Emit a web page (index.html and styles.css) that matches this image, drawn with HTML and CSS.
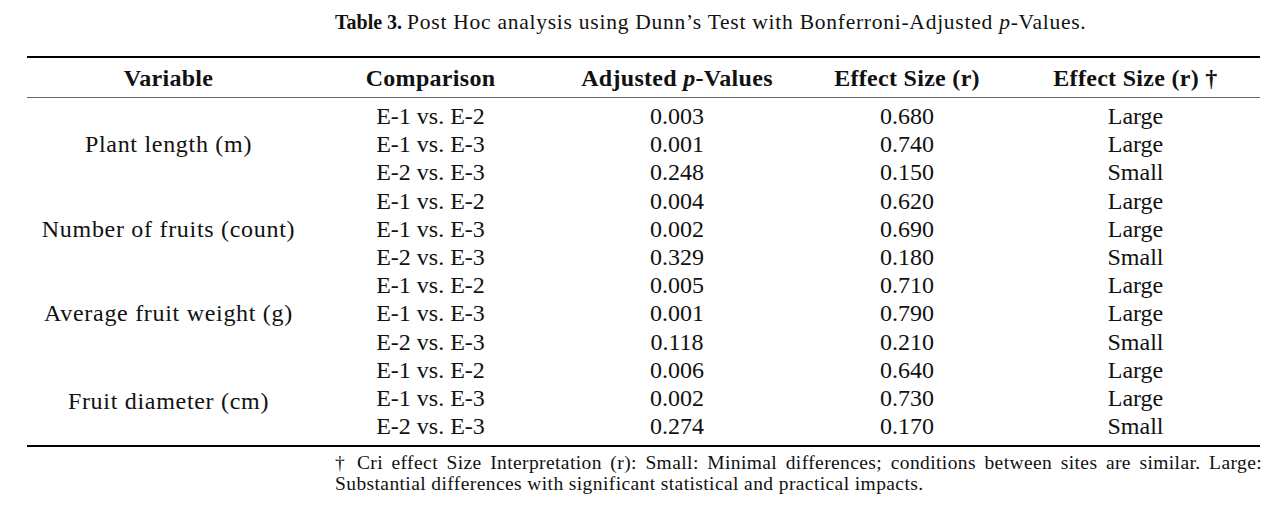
FILE: index.html
```html
<!DOCTYPE html>
<html lang="en">
<head>
<meta charset="utf-8">
<title>Table 3</title>
<link rel="stylesheet" href="styles.css">
</head>
<body>
<div class="page">
  <p class="caption"><b>Table 3.</b> <span class="cap-text">Post Hoc analysis using Dunn’s Test with Bonferroni-Adjusted <i>p</i>-Values.</span></p>
  <table class="tbl">
    <colgroup>
      <col class="c1"><col class="c2"><col class="c3"><col class="c4"><col class="c5">
    </colgroup>
    <thead>
      <tr>
        <th>Variable</th>
        <th>Comparison</th>
        <th>Adjusted <i>p</i>-Values</th>
        <th>Effect Size (r)</th>
        <th>Effect Size (r) †</th>
      </tr>
    </thead>
    <tbody>
      <tr class="first"><td class="var" rowspan="3">Plant length (m)</td><td>E-1 vs. E-2</td><td>0.003</td><td>0.680</td><td>Large</td></tr>
      <tr><td>E-1 vs. E-3</td><td>0.001</td><td>0.740</td><td>Large</td></tr>
      <tr><td>E-2 vs. E-3</td><td>0.248</td><td>0.150</td><td>Small</td></tr>
      <tr><td class="var" rowspan="3">Number of fruits (count)</td><td>E-1 vs. E-2</td><td>0.004</td><td>0.620</td><td>Large</td></tr>
      <tr><td>E-1 vs. E-3</td><td>0.002</td><td>0.690</td><td>Large</td></tr>
      <tr><td>E-2 vs. E-3</td><td>0.329</td><td>0.180</td><td>Small</td></tr>
      <tr><td class="var" rowspan="3">Average fruit weight (g)</td><td>E-1 vs. E-2</td><td>0.005</td><td>0.710</td><td>Large</td></tr>
      <tr><td>E-1 vs. E-3</td><td>0.001</td><td>0.790</td><td>Large</td></tr>
      <tr><td>E-2 vs. E-3</td><td>0.118</td><td>0.210</td><td>Small</td></tr>
      <tr><td class="var" rowspan="3">Fruit diameter (cm)</td><td>E-1 vs. E-2</td><td>0.006</td><td>0.640</td><td>Large</td></tr>
      <tr><td>E-1 vs. E-3</td><td>0.002</td><td>0.730</td><td>Large</td></tr>
      <tr class="last"><td>E-2 vs. E-3</td><td>0.274</td><td>0.170</td><td>Small</td></tr>
    </tbody>
  </table>
  <div class="note">
    <span class="note-line justified">† Cri effect Size Interpretation (r): Small: Minimal differences; conditions between sites are similar. Large:</span>
    <span class="note-line">Substantial differences with significant statistical and practical impacts.</span>
  </div>
</div>
</body>
</html>
```

FILE: styles.css
```css
html, body {
  margin: 0;
  padding: 0;
  background: #ffffff;
}

body {
  font-family: "Liberation Serif", "Times New Roman", serif;
  color: #111111;
}

.page {
  width: 1280px;
  height: 510px;
  overflow: hidden;
}

.caption {
  margin: 0;
  padding: 10px 0 0 335px;
  font-size: 20px;
  line-height: 24px;
  height: 24px;
  white-space: nowrap;
}

.caption b {
  font-weight: 700;
}

.cap-text {
  font-size: 21.5px;
  letter-spacing: 0.75px;
}

.tbl {
  margin: 22px 0 0 27px;
  width: 1233px;
  border-collapse: collapse;
  table-layout: fixed;
  border-top: 2px solid #000000;
  border-bottom: 2px solid #000000;
}

.c1 { width: 283px; }
.c2 { width: 241px; }
.c3 { width: 252px; }
.c4 { width: 208px; }
.c5 { width: 249px; }

.tbl th {
  font-size: 24px;
  font-weight: 700;
  letter-spacing: 0.3px;
  text-align: center;
  padding: 0;
  height: 39px;
  line-height: 28px;
  vertical-align: middle;
  border-bottom: 1px solid #666666;
  white-space: nowrap;
}

.tbl td {
  font-size: 24px;
  text-align: center;
  padding: 0;
  height: 28.2px;
  line-height: 28.2px;
  vertical-align: middle;
  white-space: nowrap;
}

.tbl td.var {
  letter-spacing: 0.7px;
}

.tbl tr.first td {
  padding-top: 4px;
}

.tbl tr.last td {
  padding-bottom: 5px;
}

.note {
  margin: 5px 0 0 335px;
  width: 927px;
  font-size: 19.5px;
  letter-spacing: 0.4px;
  line-height: 21px;
}

.note-line {
  display: block;
  white-space: nowrap;
}

.note-line.justified {
  text-align: justify;
  text-align-last: justify;
  white-space: normal;
}
```
